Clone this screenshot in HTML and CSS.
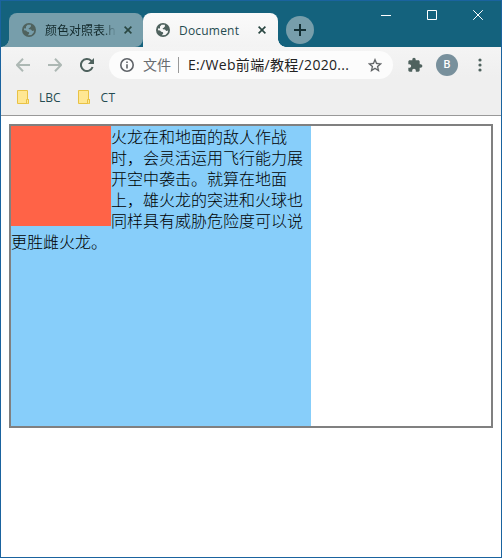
FILE: index.html
```
<!DOCTYPE html>
<html lang="zh-CN">
<head>
<meta charset="utf-8">
<title>Document</title>
<link rel="stylesheet" href="styles.css">
</head>
<body>
<div class="window">
  <header class="titlebar">
    <div class="tabs">
      <div class="tab tab-idle">
        <svg class="globe" viewBox="0 0 14 14"><circle cx="7" cy="7" r="7"/><path class="land" d="M5.600 1.800 8.800 1.700 9 3.200 7.800 4.800 6.600 5.200 7 6.300 9 6.500 10.200 8 12.200 7.400 11.600 9.800 9.400 11.900 5.800 12.200 7.200 10.400 7 9.200 5.200 8.800 4 7.400 1.900 7.200 2.200 5.200 4 5.400 4 3.600Z"/></svg>
        <span class="tab-title fade">颜色对照表.h</span>
        <svg class="close" viewBox="0 0 8 8"><path d="M.6.6 7.4 7.4M7.4.6.6 7.4"/></svg>
      </div>
      <div class="tab tab-active">
        <svg class="globe" viewBox="0 0 14 14"><circle cx="7" cy="7" r="7"/><path class="land" d="M5.600 1.800 8.800 1.700 9 3.200 7.800 4.800 6.600 5.200 7 6.300 9 6.500 10.200 8 12.200 7.400 11.600 9.800 9.400 11.900 5.800 12.200 7.200 10.400 7 9.200 5.200 8.800 4 7.400 1.900 7.200 2.200 5.200 4 5.400 4 3.600Z"/></svg>
        <span class="tab-title">Document</span>
        <svg class="close" viewBox="0 0 8 8"><path d="M.6.6 7.4 7.4M7.4.6.6 7.4"/></svg>
      </div>
      <div class="new-tab"><svg viewBox="0 0 12 12"><path d="M6 0V12M0 6H12"/></svg></div>
    </div>
    <div class="controls">
      <svg viewBox="0 0 10 10"><path d="M0 5.5H10"/></svg>
      <svg viewBox="0 0 10 10"><path d="M.5.5H9.5V9.5H.5Z"/></svg>
      <svg viewBox="0 0 10 10"><path d="M.2.2 9.8 9.8M9.8.2.2 9.8"/></svg>
    </div>
  </header>
  <div class="chrome">
    <nav class="toolbar">
      <svg class="nav dim" viewBox="0 0 14 14"><path d="M14 7H1.2M7 .8.9 7 7 13.2"/></svg>
      <svg class="nav dim" viewBox="0 0 14 14"><path d="M0 7H12.8M7 .8 13.1 7 7 13.2"/></svg>
      <svg class="nav reload" viewBox="0 0 14 14"><path d="M12.6 9A6 6 0 1 1 11.2 2.8L12 3.6"/><path class="solid" d="M14 0V6.1H7.9Z"/></svg>
      <div class="address">
        <svg class="info" viewBox="0 0 14 14"><circle cx="7" cy="7" r="6.2"/><path d="M7 6.2V10.4M7 3.6V5"/></svg>
        <span class="scheme">文件</span>
        <span class="divider"></span>
        <span class="url">E:/Web前端/教程/2020...</span>
        <svg class="star" viewBox="2 2 20 19"><path d="M22 9.24l-7.19-.62L12 2 9.19 8.63 2 9.24l5.46 4.73L5.82 21 12 17.27 18.18 21l-1.63-7.03L22 9.24zM12 15.4l-3.76 2.27 1-4.28-3.32-2.88 4.38-.38L12 6.1l1.71 4.04 4.38.38-3.32 2.88 1 4.28L12 15.4z"/></svg>
      </div>
      <svg class="puzzle" viewBox="0 0 24 24"><path d="M20.5 11H19V7c0-1.1-.9-2-2-2h-4V3.5C13 2.120 11.880 1 10.500 1S8 2.120 8 3.500V5H4c-1.100 0-1.990.9-1.990 2v3.800H3.500c1.490 0 2.700 1.210 2.700 2.700s-1.210 2.700-2.700 2.700H2V20c0 1.100.9 2 2 2h3.800v-1.500c0-1.490 1.210-2.700 2.700-2.700 1.490 0 2.700 1.210 2.700 2.700V22H17c1.100 0 2-.9 2-2v-4h1.500c1.380 0 2.500-1.120 2.500-2.500S21.880 11 20.500 11z"/></svg>
      <div class="avatar">B</div>
      <svg class="more" viewBox="0 0 4 14"><circle cx="2" cy="2" r="1.6"/><circle cx="2" cy="7" r="1.6"/><circle cx="2" cy="12" r="1.6"/></svg>
    </nav>
    <div class="bookmarks">
      <span class="bookmark"><svg viewBox="0 0 13 14"><path d="M.5.5H10.500V9.500H11.500V13.500H.5Z"/><path d="M9.500 13V9.500H11.500V13.500"/></svg>LBC</span>
      <span class="bookmark"><svg viewBox="0 0 13 14"><path d="M.5.5H10.500V9.500H11.500V13.500H.5Z"/><path d="M9.500 13V9.500H11.500V13.500"/></svg><span class="name">CT</span></span>
    </div>
  </div>
  <main class="page">
    <div class="outer">
      <div class="inner">
        <div class="float"></div>火龙在和地面的敌人作战时，会灵活运用飞行能力展开空中袭击。就算在地面上，雄火龙的突进和火球也同样具有威胁危险度可以说更胜雌火龙。
      </div>
    </div>
  </main>
</div>
</body>
</html>
```
FILE: styles.css
```
* { box-sizing: border-box; }
body { margin: 0; font-family: "Open Sans", "Noto Sans CJK SC", sans-serif; font-size: 12px; }
svg { display: block; flex: none; }
.window { width: 502px; height: 558px; border: 1px solid #1a639f; background: #fff; }
.titlebar { height: 46px; display: flex; justify-content: space-between; background: #14627d; }
.tabs { display: flex; padding: 12px 0 0 8px; }
.tab { position: relative; height: 34px; display: flex; align-items: center; padding-left: 13px; border-radius: 8px 8px 0 0; }
.tab-idle { width: 134px; background: #779eab; border-radius: 8px 8px 8px 0; }
.tab-idle::before { content: ""; position: absolute; left: -8px; bottom: 0; width: 8px; height: 8px; background: radial-gradient(circle at 0 0, transparent 7.500px, #779eab 8px); }
.tab-active { width: 135px; padding-left: 13px; background: linear-gradient(#fafafa, #f3f3f3); }
.tab-active::after { content: ""; position: absolute; right: -8px; bottom: 0; width: 8px; height: 8px; background: radial-gradient(circle at 100% 0, transparent 7.500px, #f3f3f3 8px); }
.globe { width: 14px; height: 14px; fill: #4f625e; }
.land { fill: #f7f7f7; }
.tab-idle .land { fill: #779eab; }
.tab-title { width: 70px; margin: 1px 9px 0; line-height: 18px; white-space: nowrap; color: #254b51; letter-spacing: .2px; }
.fade { color: #12292b; letter-spacing: 0; -webkit-mask-image: linear-gradient(90deg, #000 58px, transparent 72px); mask-image: linear-gradient(90deg, #000 58px, transparent 72px); }
.close { width: 8px; height: 8px; fill: none; stroke: #294641; stroke-width: 1.600; }
.new-tab { width: 28px; height: 28px; margin: 3px 0 0 8px; border-radius: 50%; background: #779eab; display: flex; align-items: center; justify-content: center; }
.new-tab svg { width: 12px; height: 12px; stroke: #132f33; stroke-width: 2; }
.controls { display: flex; gap: 36px; padding: 9px 18px 0 0; }
.controls svg { width: 10px; height: 10px; fill: none; stroke: #fff; stroke-width: 1; }
.chrome { height: 69px; background: linear-gradient(#f4f4f4, #efefef 30px); border-bottom: 1px solid #999; }
.toolbar { height: 36px; display: flex; align-items: center; padding-left: 15px; }
.nav { width: 14px; height: 14px; margin-right: 18px; fill: none; stroke: #4f625e; stroke-width: 2; }
.dim { stroke: #adb8b4; }
.reload { margin-right: 15px; }
.solid { fill: #4f625e; stroke: none; }
.address { width: 284px; height: 28px; border-radius: 14px; background: #fcfcfc; display: flex; align-items: center; padding-left: 11px; font-size: 14px; line-height: 20px; white-space: nowrap; }
.info { width: 14px; height: 14px; fill: none; stroke: #5f6368; stroke-width: 1.600; }
.scheme { width: 28px; margin: 0 7px 0 9px; color: #686c70; }
.divider { width: 1px; height: 16px; background: #999; }
.url { width: 169px; margin: 0 11px 0 9px; color: #222; letter-spacing: .32px; }
.star { width: 14px; height: 14px; fill: #5b5f60; stroke: #5b5f60; stroke-width: .3; }
.puzzle { width: 16px; height: 16px; margin-left: 14px; fill: #4f625e; }
.avatar { width: 22px; height: 22px; margin-left: 13px; border-radius: 50%; background: #78909c; color: #fff; font: 500 11px/22px Roboto, sans-serif; text-align: center; }
.more { width: 4px; height: 14px; margin-left: 20px; fill: #4f625e; }
.bookmarks { height: 32px; display: flex; gap: 17px; padding: 0 0 4px 16px; }
.bookmark { display: flex; align-items: center; color: #254b51; }
.bookmark svg { width: 13px; height: 14px; margin-right: 9px; fill: #ffe793; stroke: #e9c244; }
.name { margin-left: 1px; letter-spacing: .3px; }
.page { padding: 8px; }
.outer { width: 484px; height: 304px; border: 2px solid #808080; }
.inner { width: 300px; height: 300px; background: #87cefa; color: #000; font: 300 16px/21px "Noto Sans CJK SC", sans-serif; }
.float { float: left; width: 100px; height: 100px; background: #ff6347; }
```
